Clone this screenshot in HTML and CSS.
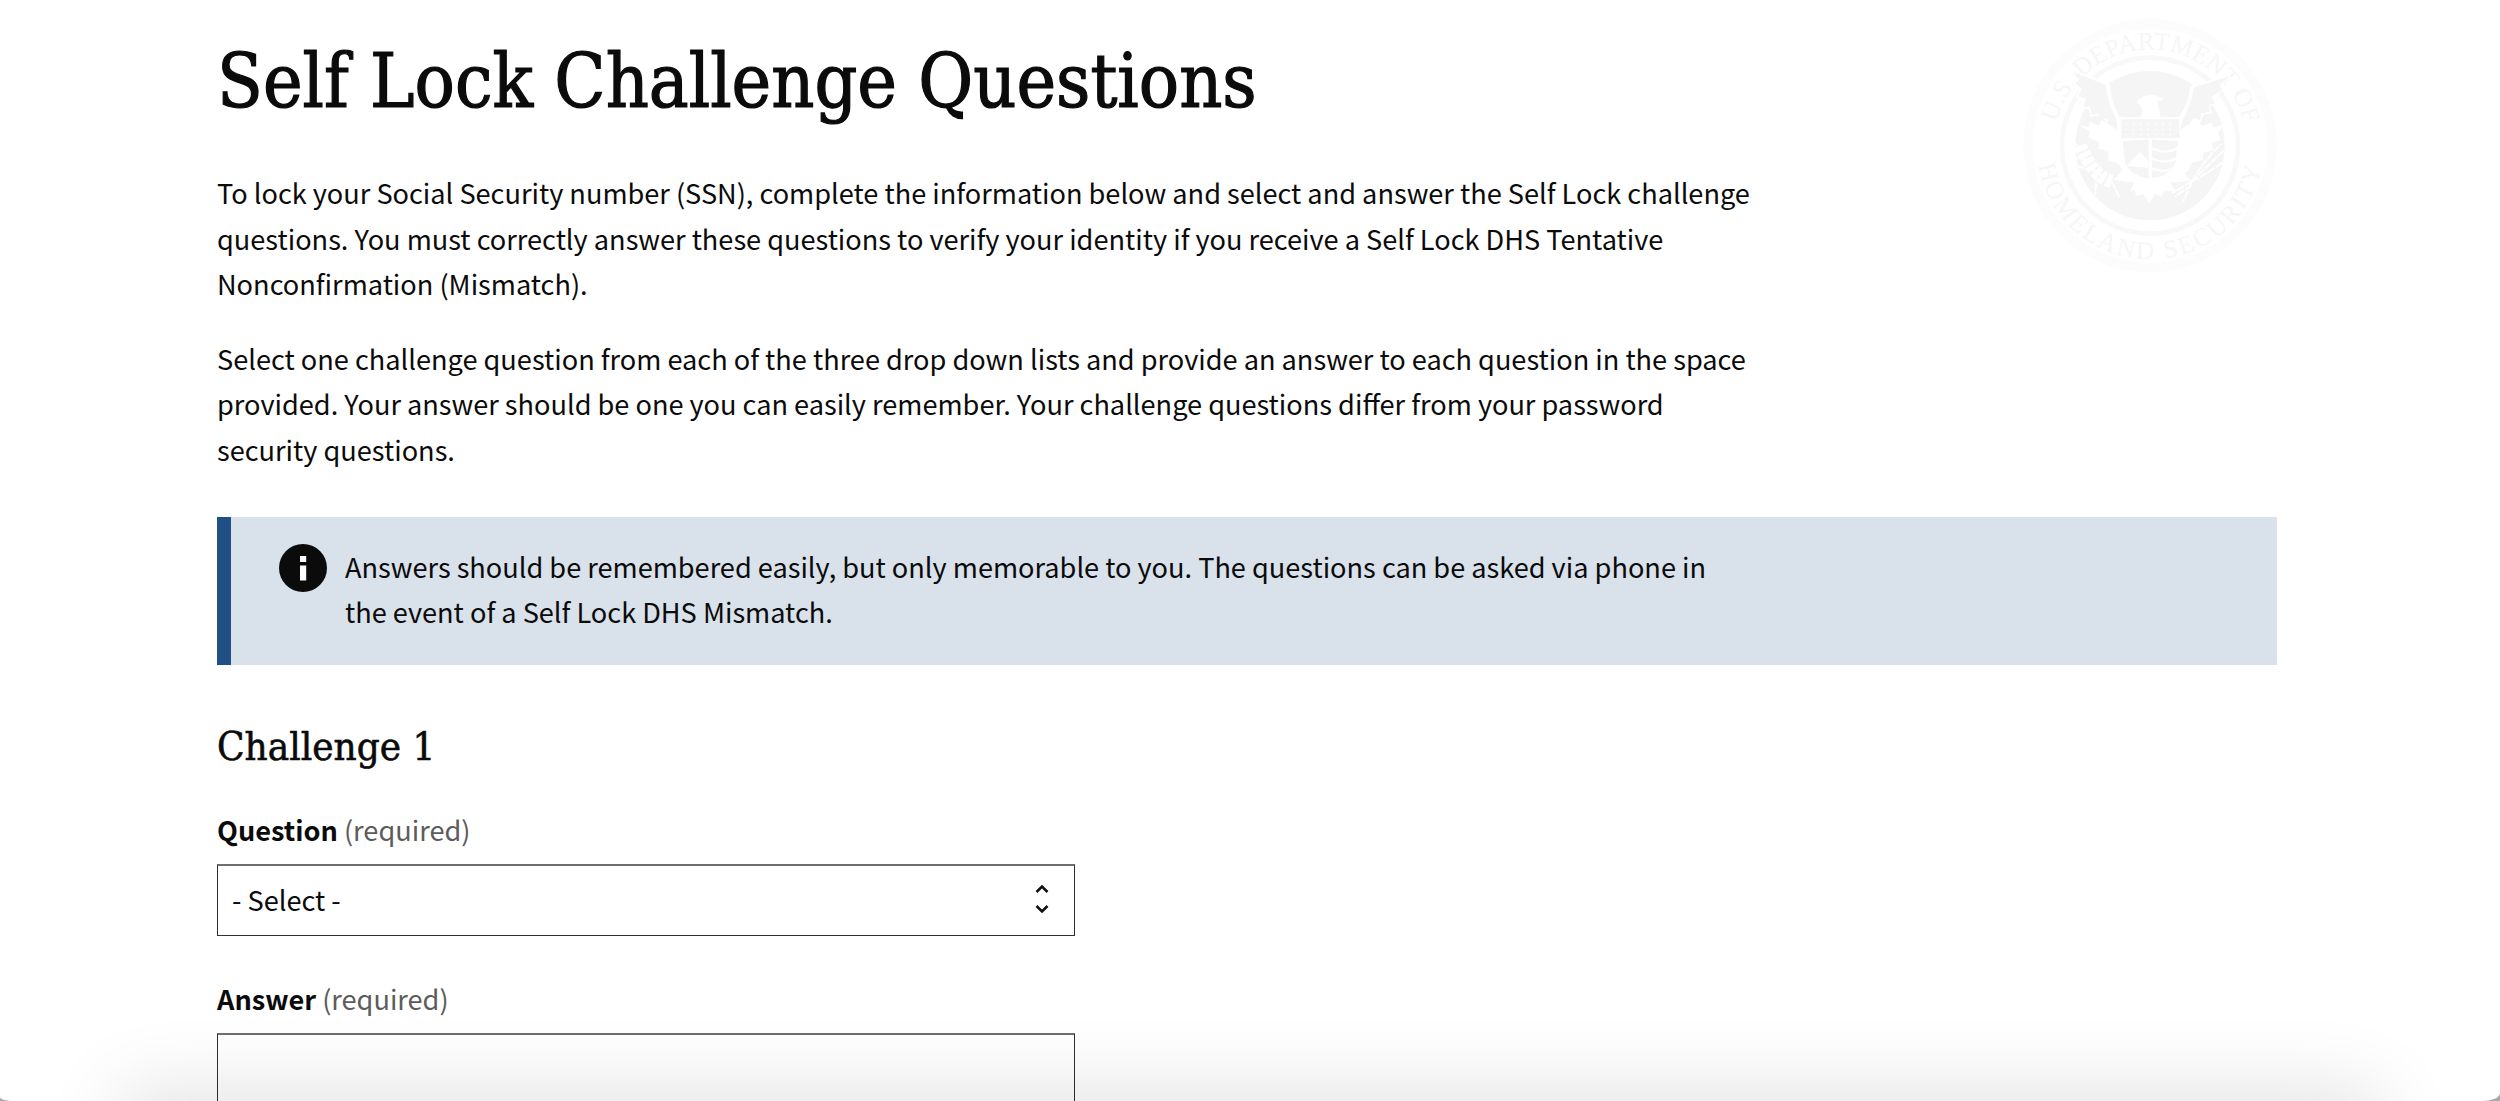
FILE: index.html
```html
<!DOCTYPE html>
<html lang="en">
<head>
<meta charset="utf-8">
<title>Self Lock Challenge Questions</title>
<link rel="stylesheet" href="styles.css">
</head>
<body>
<div class="window">
  <svg class="seal" viewBox="0 0 960 870" aria-hidden="true">
    <defs>
      <path id="arcTop" d="M 229 367 A 290 290 0 0 1 791 367"/>
      <path id="arcBottom" d="M 175 496 A 340 340 0 0 0 845 496"/>
    </defs>
    <circle class="seal-ring" cx="510" cy="437" r="366"/>
    <text class="seal-text"><textPath href="#arcTop" textLength="770" lengthAdjust="spacing">U.S. DEPARTMENT OF</textPath></text>
    <text class="seal-text"><textPath href="#arcBottom" textLength="945" lengthAdjust="spacing">HOMELAND SECURITY</textPath></text>
    <circle class="seal-inner-ring" cx="510" cy="437" r="264"/>
    <circle class="seal-disc" cx="510" cy="437" r="224"/>
    <path class="seal-white seal-outline" d="M280 215 L385 255 Q388 310 415 355 L600 355 Q632 310 635 262 L750 228 L720 255 L725 270 L695 290 L705 310 L685 315 L690 335 L665 340 L660 360 L600 390 L420 390 L355 340 L335 345 L330 322 L310 320 L318 295 L295 290 L305 265 L285 250 L298 240 Z"/>
    <path class="seal-gray" d="M400 252 Q510 190 620 252 Q595 310 590 352 L432 352 Q425 300 400 252 Z"/>
    <path class="seal-gray" d="M280 215 L378 255 Q382 310 410 360 L412 390 L385 370 L380 355 L362 362 L355 340 L335 345 L330 322 L310 320 L318 295 L295 290 L305 265 L285 250 L298 240 Z"/>
    <path class="seal-gray" d="M750 228 L642 262 Q636 310 608 360 L600 390 L630 370 L640 355 L660 360 L665 340 L690 335 L685 315 L705 310 L695 290 L725 270 L720 255 Z"/>
    <path class="seal-white" d="M295 375 L325 380 L330 365 L355 378 L365 360 L420 395 L600 395 L655 362 L665 378 L695 368 L700 382 L728 375 L715 402 L722 420 L695 428 L700 450 L670 458 L668 480 L635 488 L625 512 L612 520 L632 542 L570 548 L590 575 L555 572 L545 590 L525 582 L508 610 L490 582 L470 588 L462 570 L450 575 L462 548 L402 540 L428 508 L410 488 L385 480 L385 455 L355 445 L355 425 L325 412 L330 395 Z"/>
    <path class="seal-white" d="M470 305 Q490 280 525 286 L550 298 L532 306 L542 352 L482 352 Q496 322 470 305 Z"/>
    <path class="seal-gray" d="M424 358 L598 358 L598 415 L424 415 Z"/>
    <path class="seal-stars" d="M436 372 H590 M436 388 H590 M436 404 H590"/>
    <path class="seal-gray" d="M428 424 L506 418 L506 535 Q455 530 436 490 Z"/>
    <path class="seal-gray" d="M516 418 L594 424 L586 490 Q565 530 516 535 Z"/>
    <path class="seal-wave" d="M516 445 Q555 465 592 445 M516 475 Q555 495 590 475 M516 505 Q550 520 580 505"/>
    <path class="seal-white" d="M440 498 L480 455 L505 485 L505 503 Z"/>
    <path class="seal-leaves" d="M395 545 Q340 530 300 435"/>
    <path class="seal-stem" d="M395 545 L420 595 M340 510 L275 495 M320 480 L275 470 M315 450 L285 430 M350 520 L345 585 M375 535 L325 500"/>
    <path class="seal-stem" d="M635 545 Q690 490 750 435 M635 545 Q700 510 750 470 M635 545 Q680 470 725 432 M635 545 L610 605 M635 545 L575 580 M635 555 L585 590"/>
  </svg>

  <main class="content">
    <h1 class="title">Self Lock Challenge Questions</h1>
    <div class="intro">
      <p>To lock your Social Security number (SSN), complete the information below and select and answer the Self Lock challenge questions. You must correctly answer these questions to verify your identity if you receive a Self Lock DHS Tentative Nonconfirmation (Mismatch).</p>
      <p>Select one challenge question from each of the three drop down lists and provide an answer to each question in the space provided. Your answer should be one you can easily remember. Your challenge questions differ from your password security questions.</p>
    </div>

    <div class="alert">
      <svg class="alert-icon" viewBox="0 0 48 48" aria-hidden="true">
        <circle cx="24" cy="24" r="24" fill="#0b0b0b"/>
        <rect x="21" y="12" width="6.2" height="6" fill="#fff"/>
        <rect x="21" y="21.5" width="6.2" height="15" fill="#fff"/>
      </svg>
      <p class="alert-text">Answers should be remembered easily, but only memorable to you. The questions can be asked via phone in the event of a Self Lock DHS Mismatch.</p>
    </div>

    <h2 class="section-title">Challenge 1</h2>

    <form class="form">
      <div class="field">
        <label class="label" for="q1"><b>Question</b> <span class="hint">(required)</span></label>
        <div class="select-wrap">
          <select class="control select" id="q1"><option>- Select -</option></select>
          <svg class="select-arrows" viewBox="0 0 16 30" aria-hidden="true">
            <path d="M2.5 8 L8 2.5 L13.5 8 M2.5 22 L8 27.5 L13.5 22"/>
          </svg>
        </div>
      </div>
      <div class="field">
        <label class="label" for="a1"><b>Answer</b> <span class="hint">(required)</span></label>
        <input class="control input" id="a1" type="text">
      </div>
    </form>
  </main>

  <div class="bottom-shade"></div>
</div>
</body>
</html>
```
FILE: styles.css
```css
* { box-sizing: border-box; }
html, body { margin: 0; height: 100%; background: #a9a9a9; overflow: hidden; }
.window {
  position: relative;
  height: 1101px;
  overflow: hidden;
  background: #fff;
  border-radius: 0 0 18px 13px / 0 0 8px 4px;
  color: #0b0b0b;
  font-family: "Noto Sans CJK SC", "Source Sans Pro", "Noto Sans", sans-serif;
  font-size: 27.15px;
  line-height: 45.6px;
}
.content { padding: 34px 0 0 217px; width: 2277px; }
.title {
  margin: 0;
  font-family: "DejaVu Serif Condensed", "DejaVu Serif", serif;
  font-size: 74.5px;
  line-height: 96px;
  font-weight: 400;
  -webkit-text-stroke: 1.2px #0b0b0b;
}
.intro { width: 1545px; margin-top: 40px; }
.intro p { margin: 0 0 29px; }
.alert {
  display: flex;
  align-items: flex-start;
  gap: 18px;
  height: 148px;
  margin-top: 44px;
  padding: 28px 0 0 48px;
  background: #d9e1ea;
  border-left: 14px solid #1f4f84;
}
.alert-icon { width: 48px; height: 48px; flex: none; margin-top: -1px; }
.alert-text { margin: 0; width: 1400px; margin-top: -1px; }
.section-title {
  margin: 49px 0 0;
  font-family: "DejaVu Serif Condensed", "DejaVu Serif", serif;
  font-size: 40px;
  line-height: 64px;
  font-weight: 400;
  -webkit-text-stroke: .6px #0b0b0b;
}
.form { display: flex; flex-direction: column; gap: 40px; margin-top: 29px; }
.field { display: flex; flex-direction: column; gap: 12px; width: 858px; }
.label { display: block; line-height: 45px; }
.label b { font-weight: 700; }
.hint { color: #5c5c5c; }
.select-wrap { position: relative; }
.control {
  display: block;
  width: 100%;
  height: 72px;
  margin: 0;
  padding: 0 14px;
  background: #fff;
  border: 1px solid #2f2f2f;
  border-top: 2px solid #6f6f6f;
  border-radius: 0;
  font: inherit;
  color: #0b0b0b;
  appearance: none;
}
.input { height: 130px; }
.select-arrows {
  position: absolute;
  right: 25px;
  top: 20px;
  width: 16px;
  height: 30px;
  fill: none;
  stroke: #111;
  stroke-width: 2.6;
}
.seal { position: absolute; left: 1980px; top: 0; width: 320px; height: 290px; }
.seal-ring { fill: none; stroke: #fcfcfc; stroke-width: 28; }
.seal-text {
  font-family: "Liberation Serif", serif;
  font-size: 76px;
  fill: #f6f6f6;
}
.seal-inner-ring { fill: none; stroke: #f8f8f8; stroke-width: 14; }
.seal-disc { fill: #f5f5f5; }
.seal-white { fill: #fff; }
.seal-outline { stroke: #fff; stroke-width: 10; }
.seal-gray { fill: #f5f5f5; }
.seal-stars { fill: none; stroke: #fff; stroke-width: 4; stroke-dasharray: 5 17; }
.seal-wave { fill: none; stroke: #fff; stroke-width: 7; }
.seal-leaves { fill: none; stroke: #fff; stroke-width: 40; stroke-dasharray: 16 6; }
.seal-stem { fill: none; stroke: #fff; stroke-width: 6; stroke-dasharray: 24 4; }
.bottom-shade {
  position: absolute;
  left: 130px;
  right: 130px;
  bottom: -60px;
  height: 60px;
  box-shadow: 0 0 80px 10px rgba(0, 0, 0, .12);
  pointer-events: none;
}
```
